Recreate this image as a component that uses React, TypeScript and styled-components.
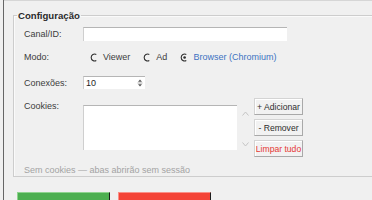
import React from "react";
import styled, { createGlobalStyle } from "styled-components";

const GlobalStyle = createGlobalStyle`
  html, body {
    margin: 0;
    background: #f0f0f0;
    overflow: hidden;
  }
  body {
    font-family: "Liberation Sans", Arial, sans-serif;
    font-size: 9px;
    color: #3c3c3c;
  }
`;

const tabs = [
  { width: 54, active: true },
  { width: 50, active: false },
  { width: 55, active: false },
  { width: 77, active: false },
  { width: 38, active: false },
];

const Radio = ({ checked }: { checked?: boolean }) => (
  <svg width="9" height="9" viewBox="0 0 9 9">
    <path
      d="M6.3 1.4 A3.5 3.5 0 1 0 6.3 7.6"
      fill="none"
      stroke="#2e2e2e"
      strokeWidth="1.1"
    />
    {checked && <circle cx="4.6" cy="4.5" r="1.3" fill="#2e2e2e" />}
  </svg>
);

const SpinArrows = () => (
  <svg width="6" height="10" viewBox="0 0 6 10">
    <path d="M3 1.5 L5 3.8 L1 3.8 Z" fill="#555" />
    <line x1="0.5" y1="5" x2="5.5" y2="5" stroke="#9a9a9a" strokeWidth="0.8" />
    <path d="M1 6.2 L5 6.2 L3 8.5 Z" fill="#555" />
  </svg>
);

const Chevron = ({ up }: { up?: boolean }) => (
  <svg width="7" height="5" viewBox="0 0 7 5">
    <path
      d={up ? "M0.5 4.5 L3.5 1 L6.5 4.5" : "M0.5 0.5 L3.5 4 L6.5 0.5"}
      fill="none"
      stroke="#c4c4c4"
      strokeWidth="1"
    />
  </svg>
);

export default function App() {
  return (
    <>
      <GlobalStyle />
      <Window>
        <TabStrip>
          {tabs.map((t, i) => (
            <TabStub key={i} $width={t.width} $active={t.active} />
          ))}
        </TabStrip>
        <Body>
          <Group>
            <Legend>Configuração</Legend>
            <Row $top={0}>
              <Label>Canal/ID:</Label>
              <TextInput />
            </Row>
            <Row $top={10}>
              <Label>Modo:</Label>
              <RadioGroup>
                <RadioItem>
                  <Radio />
                  Viewer
                </RadioItem>
                <RadioItem>
                  <Radio />
                  Ad
                </RadioItem>
                <RadioItem $selected>
                  <Radio checked />
                  Browser (Chromium)
                </RadioItem>
              </RadioGroup>
            </Row>
            <Row $top={13}>
              <Label>Conexões:</Label>
              <Spin>
                <SpinValue>10</SpinValue>
                <SpinArrows />
              </Spin>
            </Row>
            <CookieRow>
              <CookieLabel>Cookies:</CookieLabel>
              <CookieBox />
              <ScrollCol>
                <Chevron up />
                <Chevron />
              </ScrollCol>
              <ButtonCol>
                <SideButton>+ Adicionar</SideButton>
                <SideButton>- Remover</SideButton>
                <SideButton $danger>Limpar tudo</SideButton>
              </ButtonCol>
            </CookieRow>
            <Hint>Sem cookies — abas abrirão sem sessão</Hint>
          </Group>
          <ActionRow>
            <ActionButton $color="#4caf50" $light="#8fd48f" />
            <ActionButton $color="#f44336" $light="#f99088" />
          </ActionRow>
        </Body>
      </Window>
    </>
  );
}

const Window = styled.div`
  margin-left: 3px;
  height: 100vh;
  border-left: 1px solid #666;
  display: flex;
  flex-direction: column;
`;

const TabStrip = styled.div`
  display: flex;
  height: 3px;
  border-top: 1px solid #d6d6d6;
  box-sizing: border-box;
`;

const TabStub = styled.div<{ $width: number; $active: boolean }>`
  width: ${(p) => p.$width}px;
  background: ${(p) => (p.$active ? "#ececec" : "#cbcbcb")};
  border-right: 1px solid ${(p) => (p.$active ? "#b8b8b8" : "#a8a8a8")};
`;

const Body = styled.div`
  padding: 9px 0 0 9px;
  display: flex;
  flex-direction: column;
`;

const Group = styled.fieldset`
  width: 420px;
  margin: 0;
  padding: 6px 0 1px 10px;
  border: 1px solid #cdcdcd;
  box-shadow: inset 1px 1px 0 #fafafa;
  display: flex;
  flex-direction: column;
  min-width: 0;
`;

const Legend = styled.legend`
  padding: 0 1px;
  margin-left: -7px;
  font-weight: bold;
  font-size: 9.6px;
  line-height: 11px;
  color: #2a2a2a;
`;

const Row = styled.div<{ $top: number }>`
  display: flex;
  align-items: center;
  margin-top: ${(p) => p.$top}px;
`;

const Label = styled.span`
  width: 59px;
  flex-shrink: 0;
`;

const TextInput = styled.div`
  width: 204px;
  height: 14px;
  box-sizing: border-box;
  background: #fff;
  border-top: 1px solid #b5b5b5;
  border-left: 1px solid #cfcfcf;
`;

const RadioGroup = styled.div`
  display: flex;
  align-items: center;
  gap: 13px;
  padding-left: 7px;
  height: 12px;
`;

const RadioItem = styled.span<{ $selected?: boolean }>`
  display: flex;
  align-items: center;
  gap: 4px;
  color: ${(p) => (p.$selected ? "#3d72c2" : "#3c3c3c")};
`;

const Spin = styled.div`
  width: 62px;
  height: 13px;
  box-sizing: border-box;
  background: #fff;
  border-top: 1px solid #b5b5b5;
  border-left: 1px solid #cfcfcf;
  display: flex;
  align-items: center;
  justify-content: space-between;
  padding: 0 2px 0 2px;
`;

const SpinValue = styled.span`
  color: #1e1e1e;
`;

const CookieRow = styled.div`
  display: flex;
  align-items: flex-start;
  margin-top: 9px;
`;

const CookieLabel = styled(Label)`
  margin-top: 3px;
`;

const CookieBox = styled.div`
  width: 154px;
  height: 45px;
  margin-top: 7px;
  box-sizing: border-box;
  background: #fff;
  border-top: 1px solid #b5b5b5;
  border-left: 1px solid #cfcfcf;
`;

const ScrollCol = styled.div`
  width: 17px;
  height: 45px;
  margin-top: 7px;
  padding: 6px 0 3px;
  box-sizing: border-box;
  display: flex;
  flex-direction: column;
  align-items: center;
  justify-content: space-between;
`;

const ButtonCol = styled.div`
  display: flex;
  flex-direction: column;
  gap: 4px;
`;

const SideButton = styled.button<{ $danger?: boolean }>`
  width: 49px;
  height: 17px;
  padding: 0;
  white-space: nowrap;
  font-family: "Liberation Sans", Arial, sans-serif;
  font-size: 8.6px;
  color: ${(p) => (p.$danger ? "#e53935" : "#2e2e2e")};
  background: #f2f2f2;
  border: 1px solid #a9a9a9;
  border-top-color: #d4d4d4;
  border-left-color: #d4d4d4;
  box-shadow: inset 1px 1px 0 #fff;
`;

const Hint = styled.div`
  margin-top: 8px;
  color: #a3a3a3;
  line-height: 10px;
  height: 10px;
`;

const ActionRow = styled.div`
  display: flex;
  gap: 8px;
  margin: 15px 0 0 4px;
`;

const ActionButton = styled.div<{ $color: string; $light: string }>`
  width: 93px;
  height: 26px;
  box-sizing: border-box;
  background: ${(p) => p.$color};
  border-top: 1px solid ${(p) => p.$light};
  border-left: 1px solid ${(p) => p.$light};
  border-right: 1px solid #1c1c1c;
`;
